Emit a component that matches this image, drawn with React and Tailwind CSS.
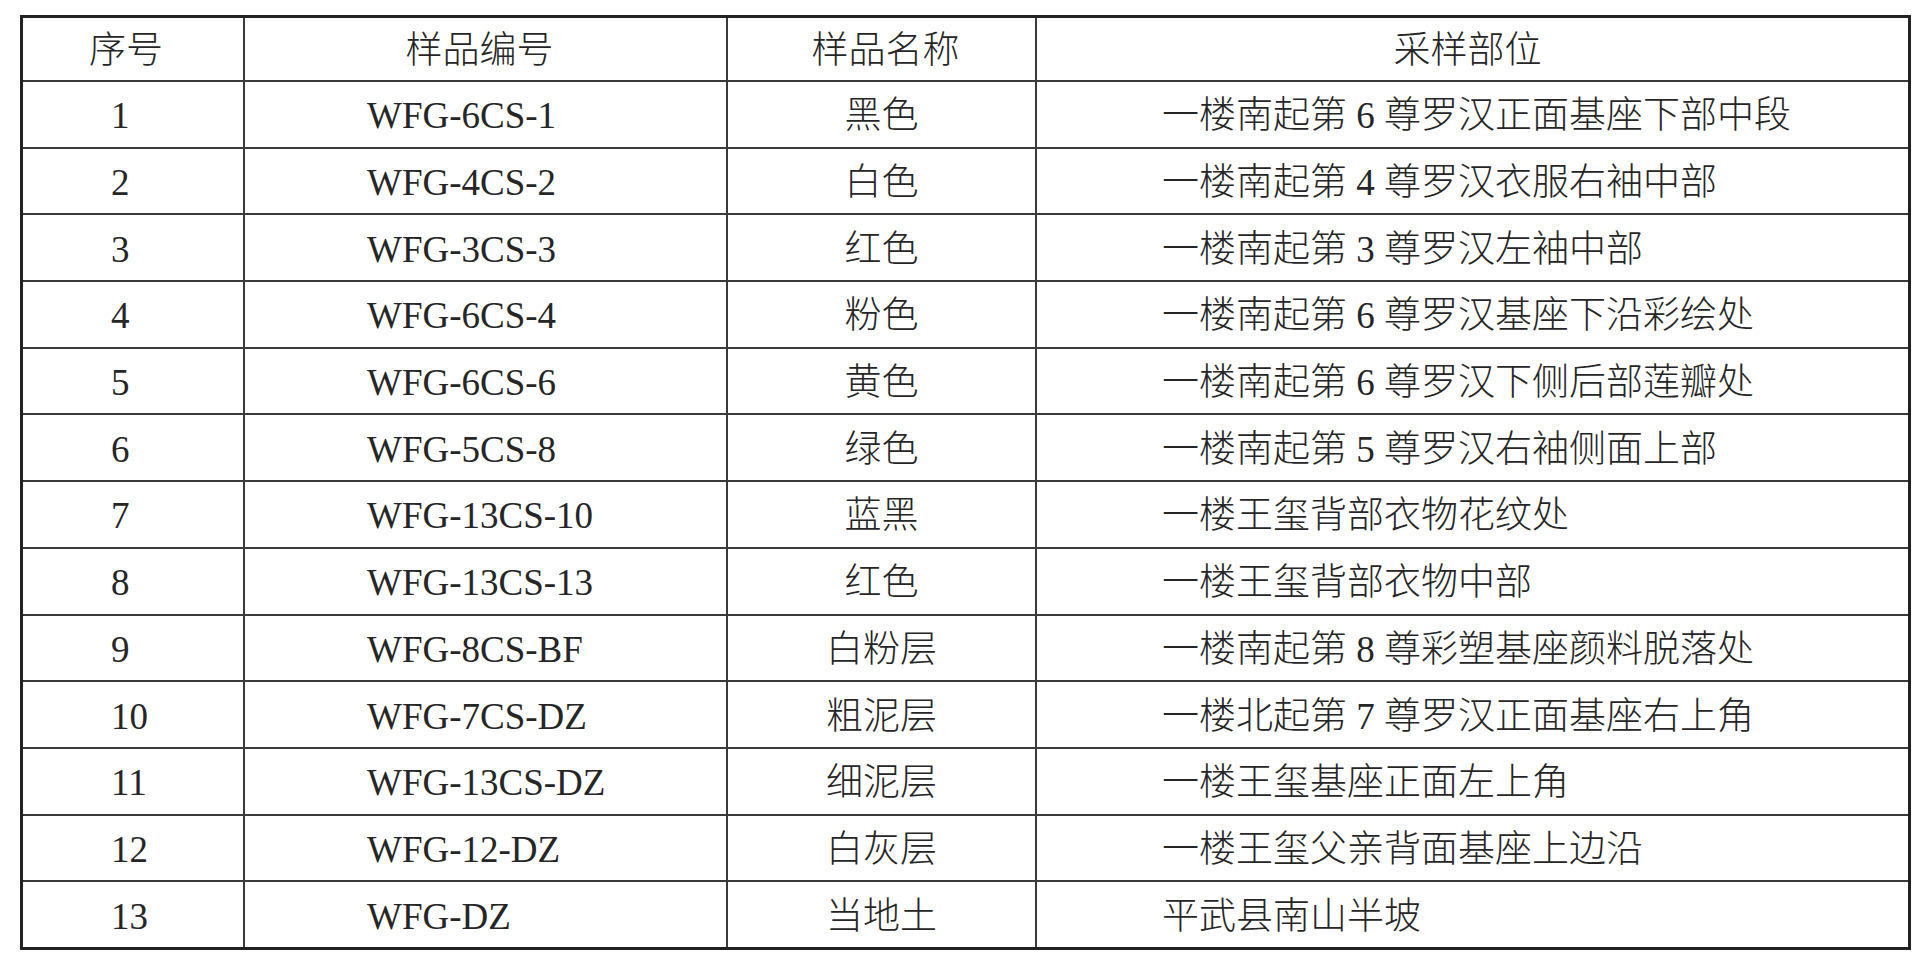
import React from "react";

const rows = [
  ["1", "WFG-6CS-1", "黑色", "一楼南起第 6 尊罗汉正面基座下部中段"],
  ["2", "WFG-4CS-2", "白色", "一楼南起第 4 尊罗汉衣服右袖中部"],
  ["3", "WFG-3CS-3", "红色", "一楼南起第 3 尊罗汉左袖中部"],
  ["4", "WFG-6CS-4", "粉色", "一楼南起第 6 尊罗汉基座下沿彩绘处"],
  ["5", "WFG-6CS-6", "黄色", "一楼南起第 6 尊罗汉下侧后部莲瓣处"],
  ["6", "WFG-5CS-8", "绿色", "一楼南起第 5 尊罗汉右袖侧面上部"],
  ["7", "WFG-13CS-10", "蓝黑", "一楼王玺背部衣物花纹处"],
  ["8", "WFG-13CS-13", "红色", "一楼王玺背部衣物中部"],
  ["9", "WFG-8CS-BF", "白粉层", "一楼南起第 8 尊彩塑基座颜料脱落处"],
  ["10", "WFG-7CS-DZ", "粗泥层", "一楼北起第 7 尊罗汉正面基座右上角"],
  ["11", "WFG-13CS-DZ", "细泥层", "一楼王玺基座正面左上角"],
  ["12", "WFG-12-DZ", "白灰层", "一楼王玺父亲背面基座上边沿"],
  ["13", "WFG-DZ", "当地土", "平武县南山半坡"],
];

export default function App() {
  return (
    <div className="w-[1928px] h-[968px] bg-white pt-[15px] pl-[20px] font-['Liberation_Serif','Noto_Sans_CJK_SC',serif] text-[37px] leading-none text-[#262626] font-light">
      <div className="grid grid-cols-[220px_481px_307px_871px] grid-rows-[62px_repeat(13,minmax(0,1fr))] gap-[2px] bg-[#3a3a3a] border-[3px] border-[#222] w-[1891px] h-[935px]">
        <div className="bg-white flex items-center justify-center pt-[2px] pr-[14px]">序号</div>
        <div className="bg-white flex items-center justify-center pt-[2px] pr-[12px]">样品编号</div>
        <div className="bg-white flex items-center justify-center pt-[2px] pl-[8px]">样品名称</div>
        <div className="bg-white flex items-center justify-center pt-[2px] pr-[10px]">采样部位</div>
        {rows.map((r) => (
          <React.Fragment key={r[0]}>
            <div className="bg-white flex items-center pt-[3px] pl-[88px]">{r[0]}</div>
            <div className="bg-white flex items-center pt-[3px] pl-[122px]">{r[1]}</div>
            <div className="bg-white flex items-center justify-center pt-[3px]">{r[2]}</div>
            <div className="bg-white flex items-center pt-[3px] pl-[125px] whitespace-pre">{r[3]}</div>
          </React.Fragment>
        ))}
      </div>
    </div>
  );
}
